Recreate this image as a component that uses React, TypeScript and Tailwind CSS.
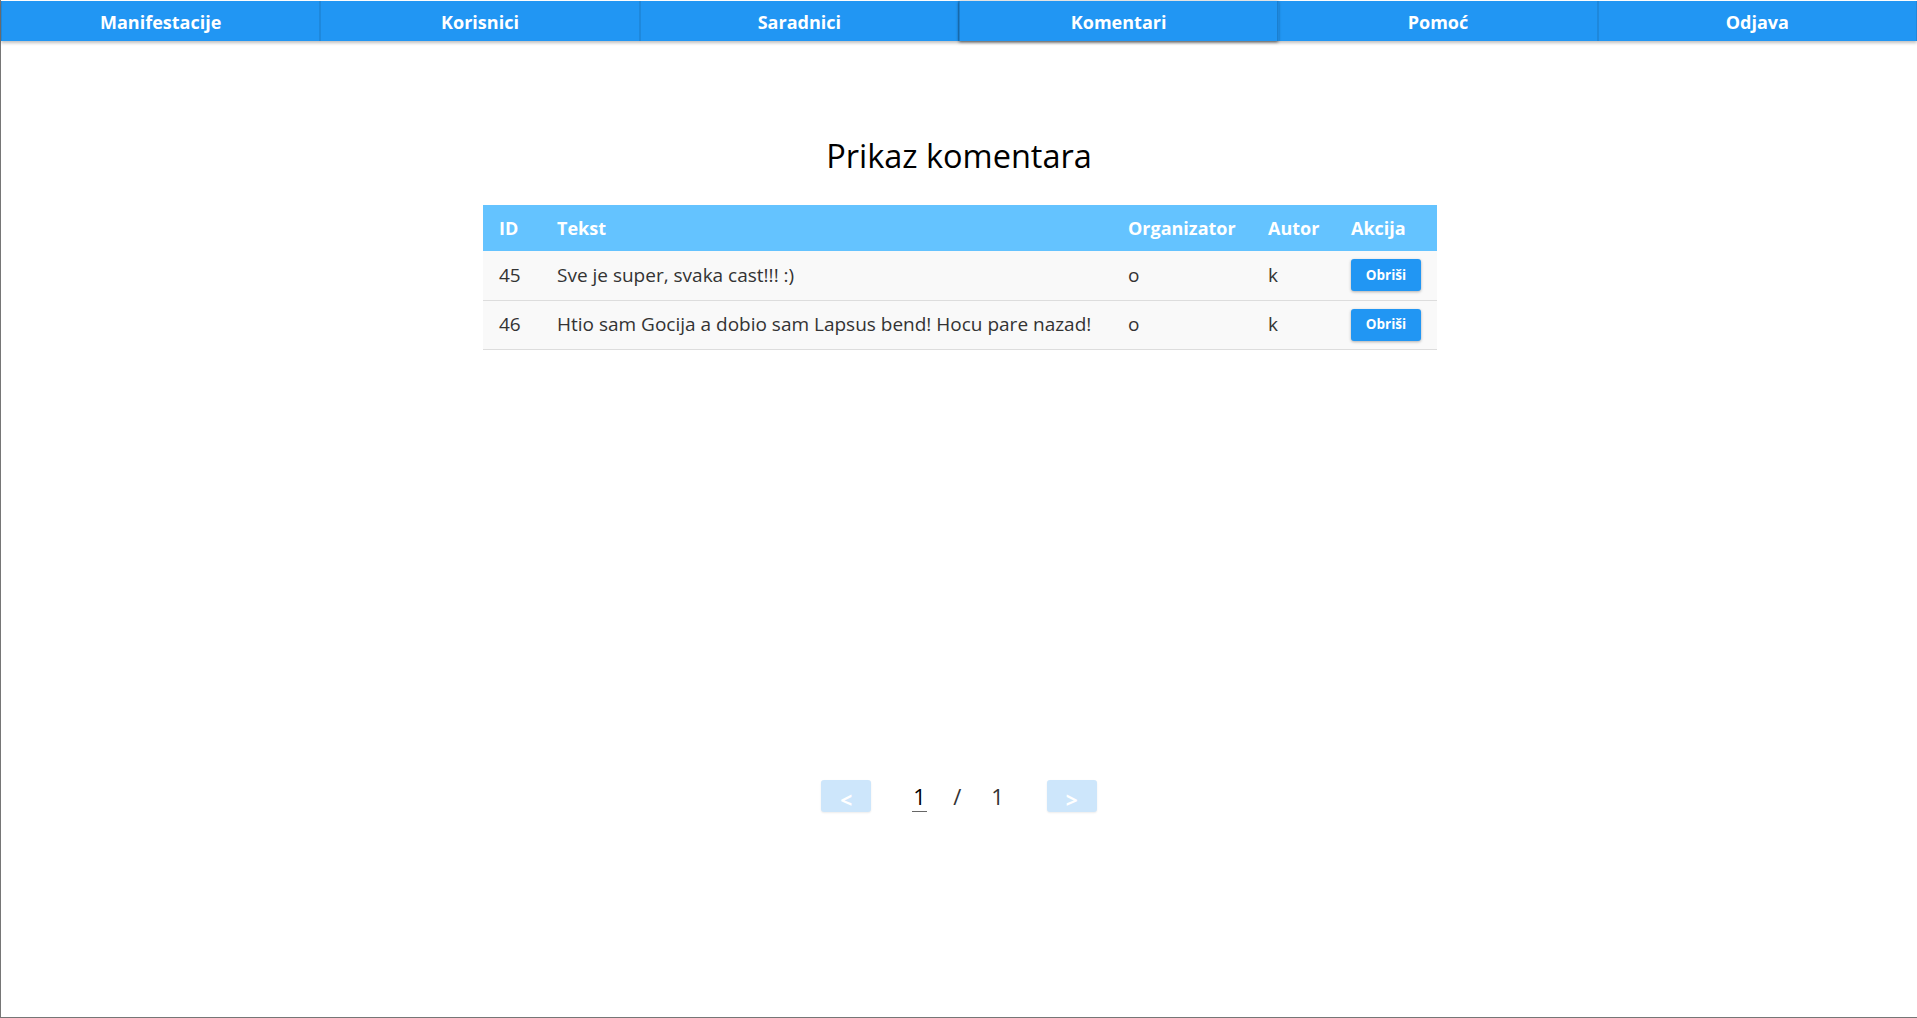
import { useState } from "react";

const tabs = ["Manifestacije", "Korisnici", "Saradnici", "Komentari", "Pomoć", "Odjava"];

const comments = [
  { id: 45, text: "Sve je super, svaka cast!!! :)", organizer: "o", author: "k" },
  { id: 46, text: "Htio sam Gocija a dobio sam Lapsus bend! Hocu pare nazad!", organizer: "o", author: "k" },
];

function NavBar({ active }: { active: string }) {
  return (
    <nav className="flex h-[40px] bg-[#2196f3] shadow-[0_2px_3px_rgba(0,0,0,0.25)] relative z-10">
      {tabs.map((t) => (
        <button
          key={t}
          className={
            t === active
              ? "flex-1 pt-[2px] text-white font-bold text-[18px] shadow-[0_1px_3px_rgba(0,0,0,0.6)] border-x border-[#1b7fcf]"
              : "flex-1 pt-[2px] text-white font-bold text-[18px] border-x border-[#1e88dc]"
          }
        >
          {t}
        </button>
      ))}
    </nav>
  );
}

function CommentsTable() {
  const [rows, setRows] = useState(comments);
  return (
    <table className="w-[954px] table-fixed border-collapse text-[19px]">
      <colgroup>
        <col className="w-[58px]" />
        <col className="w-[571px]" />
        <col className="w-[140px]" />
        <col className="w-[83px]" />
        <col className="w-[102px]" />
      </colgroup>
      <thead>
        <tr className="bg-[#64c3ff] text-white font-bold h-[46px] text-left text-[18px]">
          <th className="pl-4">ID</th>
          <th className="pl-4">Tekst</th>
          <th className="pl-4">Organizator</th>
          <th className="pl-4">Autor</th>
          <th className="pl-4">Akcija</th>
        </tr>
      </thead>
      <tbody className="text-[#333]">
        {rows.map((c) => (
          <tr key={c.id} className="bg-[#f9f9f9] h-[49px] border-b border-[#dddddd]">
            <td className="pl-4">{c.id}</td>
            <td className="pl-4 whitespace-nowrap">{c.text}</td>
            <td className="pl-4">{c.organizer}</td>
            <td className="pl-4">{c.author}</td>
            <td className="pl-4">
              <button
                onClick={() => setRows((r) => r.filter((x) => x.id !== c.id))}
                className="w-[70px] h-[32px] rounded-[3px] bg-[#2196f3] text-white font-bold text-[13.5px] shadow-[0_1px_3px_rgba(0,0,0,0.3)]"
              >
                Obriši
              </button>
            </td>
          </tr>
        ))}
      </tbody>
    </table>
  );
}

function Pager() {
  return (
    <div className="flex items-center">
      <button className="w-[50px] h-[32px] rounded-[3px] bg-[#cde6fb] text-white font-bold text-[21px] leading-none pt-[8px] shadow-[0_1px_2px_rgba(0,0,0,0.08)]">
        &lt;
      </button>
      <div className="ml-[41px] w-[15px] text-center text-[22px] text-black border-b border-[#666] leading-[30px]">1</div>
      <div className="ml-[26px] text-[22px] text-[#333]">/</div>
      <div className="ml-[30px] text-[22px] text-[#333]">1</div>
      <button className="ml-[43px] w-[50px] h-[32px] rounded-[3px] bg-[#cde6fb] text-white font-bold text-[21px] leading-none pt-[8px] shadow-[0_1px_2px_rgba(0,0,0,0.08)]">
        &gt;
      </button>
    </div>
  );
}

export default function App() {
  return (
    <div className="h-[1018px] w-full bg-white border-l border-b border-[#767676] pt-px flex flex-col font-['Open_Sans',sans-serif]">
      <NavBar active="Komentari" />
      <main className="flex flex-col items-center">
        <h1 className="mt-[95px] text-[32.5px] leading-[39px] text-black">Prikaz komentara</h1>
        <div className="mt-[30px] ml-[2px]">
          <CommentsTable />
        </div>
        <div className="mt-[430px]">
          <Pager />
        </div>
      </main>
    </div>
  );
}
